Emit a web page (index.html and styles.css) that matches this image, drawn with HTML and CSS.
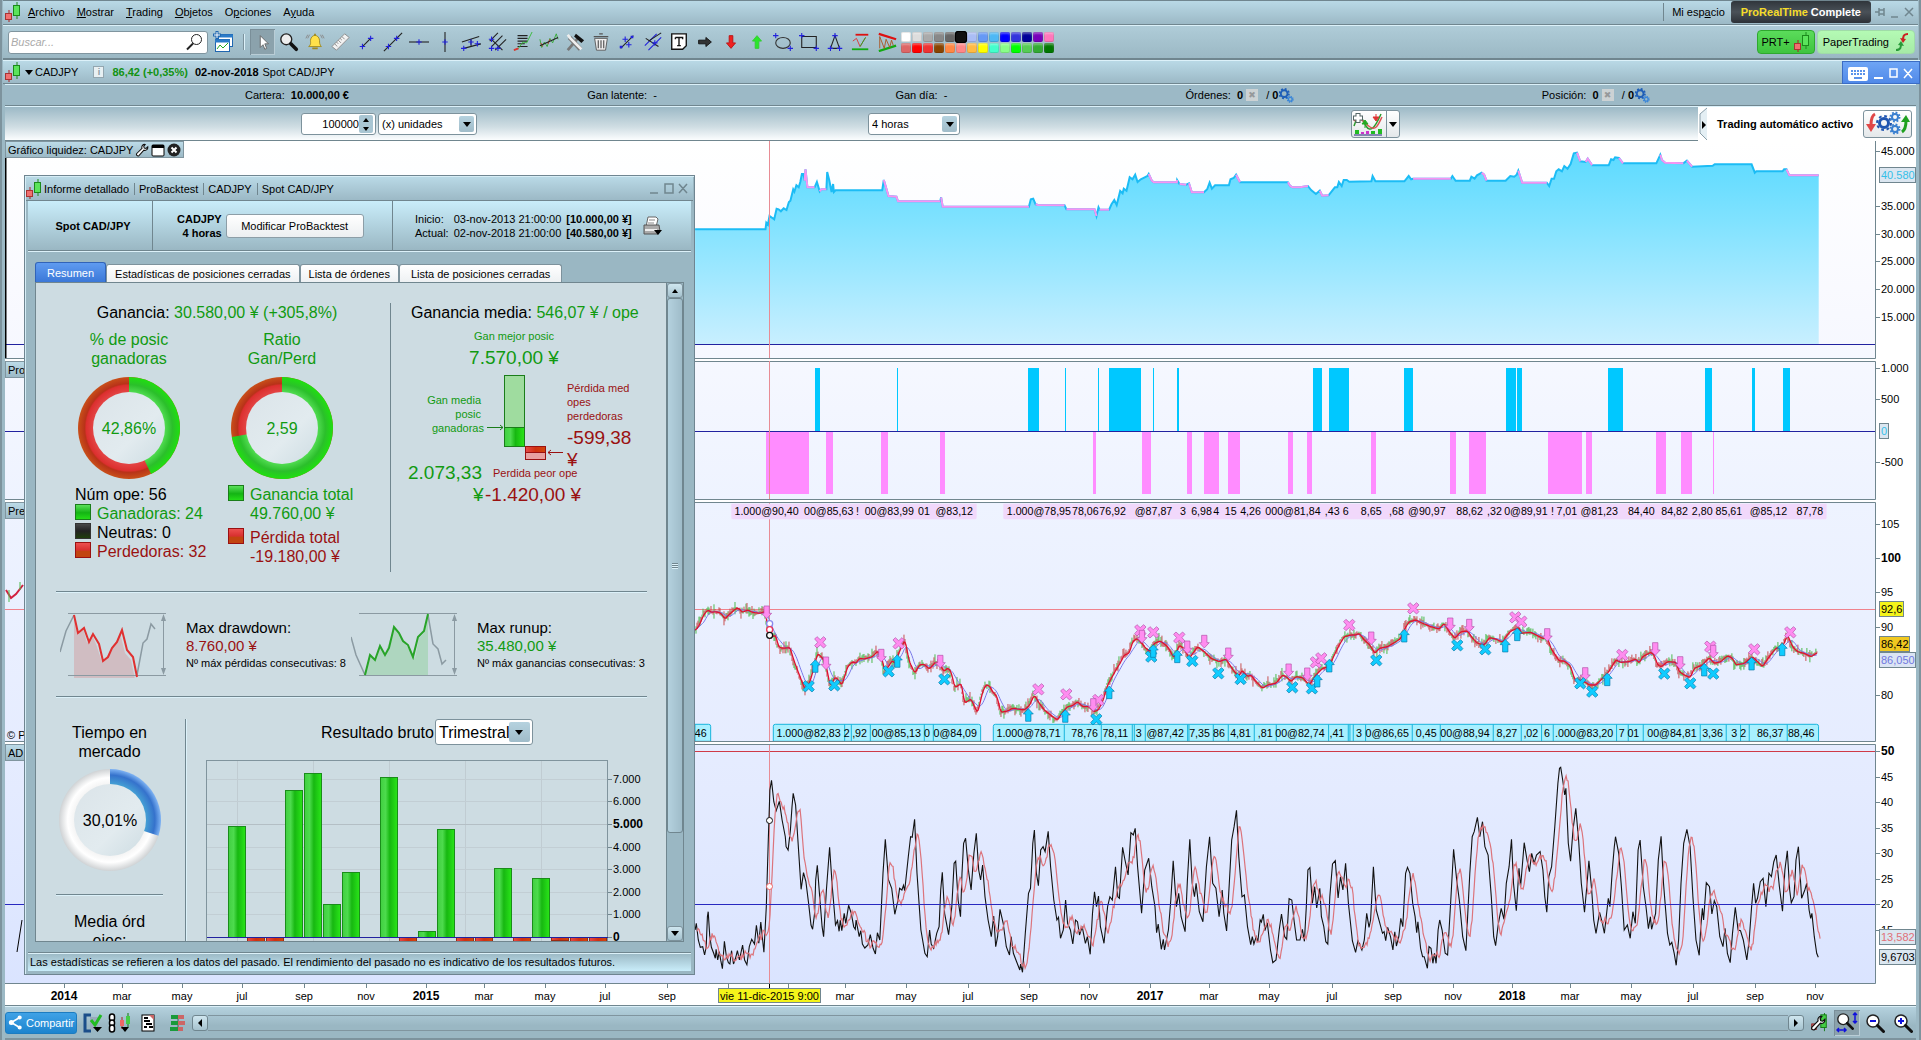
FILE: index.html
```html
<!DOCTYPE html>
<html lang="es">
<head>
<meta charset="utf-8">
<title>ProRealTime Complete</title>
<link rel="stylesheet" href="styles.css">
</head>
<body>
<svg class="defs" aria-hidden="true">
  <defs>
    <symbol id="candles" viewBox="0 0 16 20">
      <path d="M4 8v12" stroke="#a22"/><rect x=".5" y="11.500" width="6" height="6" fill="#f07070" stroke="#a33"/>
      <path d="M12 0v17" stroke="#1c8a1c"/><rect x="8.500" y="3.500" width="6" height="10" fill="#5be45b" stroke="#1c8a1c"/>
    </symbol>
    <symbol id="gears" viewBox="0 0 16 16">
      <circle cx="5.500" cy="6" r="3.600" fill="none" stroke="#1f5fb8" stroke-width="2"/>
      <circle cx="5.500" cy="6" r="5" fill="none" stroke="#1f5fb8" stroke-width="2" stroke-dasharray="2 1.930"/>
      <circle cx="12" cy="12" r="2" fill="none" stroke="#3a86d8" stroke-width="1.500"/>
      <circle cx="12" cy="12" r="3" fill="none" stroke="#3a86d8" stroke-width="1.500" stroke-dasharray="1.300 1.056"/>
    </symbol>
    <symbol id="lens" viewBox="0 0 20 20">
      <circle cx="8" cy="8" r="6" fill="#fff" stroke="#222" stroke-width="1.500"/><path d="M12.500 12.500l6 6" stroke="#111" stroke-width="3" stroke-linecap="round"/>
    </symbol>
    <symbol id="wrench" viewBox="0 0 16 16">
      <path d="M2 12l6-6c-.8-2.500 1-4.800 3.600-4.400L10 3.800l.6 2 2 .4 2-1.800c.4 2.800-1.800 4.600-4.400 3.800L4.500 14.500c-1.700 1-3.500-.8-2.500-2.500z" fill="#fff" stroke="#111" stroke-width="1.200"/>
    </symbol>
    <linearGradient id="green" x1="0" x2="1" y1="0" y2="0"><stop offset="0" stop-color="#41cf41"/><stop offset=".3" stop-color="#4ddb4d"/><stop offset=".55" stop-color="#17b811"/><stop offset="1" stop-color="#2ae619"/></linearGradient>
    <linearGradient id="red" x1="0" x2="1" y1="0" y2="0"><stop offset="0" stop-color="#e84848"/><stop offset=".5" stop-color="#d03010"/><stop offset="1" stop-color="#d2450a"/></linearGradient>
    <radialGradient id="ring-green" gradientUnits="userSpaceOnUse" cx="52" cy="52" r="51"><stop offset=".7" stop-color="#52dc52"/><stop offset=".85" stop-color="#2bbf2b"/><stop offset="1" stop-color="#1fe010"/></radialGradient>
    <radialGradient id="ring-red" gradientUnits="userSpaceOnUse" cx="52" cy="52" r="51"><stop offset=".7" stop-color="#e34545"/><stop offset=".84" stop-color="#dc2f2f"/><stop offset=".87" stop-color="#b83218"/><stop offset="1" stop-color="#c8501a"/></radialGradient>
    <radialGradient id="ring-blue" gradientUnits="userSpaceOnUse" cx="52" cy="52" r="51"><stop offset=".7" stop-color="#45a0d4"/><stop offset=".88" stop-color="#3572cc"/><stop offset="1" stop-color="#7fb4f4"/></radialGradient>
    <radialGradient id="ring-white" gradientUnits="userSpaceOnUse" cx="52" cy="52" r="51"><stop offset=".7" stop-color="#f4f4f4"/><stop offset=".83" stop-color="#fff"/><stop offset="1" stop-color="#cfd2d4"/></radialGradient>
    <linearGradient id="hole" x1="0" y1="0" x2="1" y2="1"><stop offset="0" stop-color="#dbe4e9"/><stop offset=".6" stop-color="#e2ebef"/><stop offset="1" stop-color="#cddce2"/></linearGradient>
    <linearGradient id="equity" x1="0" y1="0" x2="0" y2="1"><stop offset="0" stop-color="#5cdaff"/><stop offset=".35" stop-color="#7fe2ff"/><stop offset="1" stop-color="#c8efff"/></linearGradient>
  </defs>
</svg>

<div class="app">
  <header class="menubar">
    <svg class="candles"><use href="#candles"/></svg>
    <nav class="menus"><a href="#"><u>A</u>rchivo</a><a href="#"><u>M</u>ostrar</a><a href="#"><u>T</u>rading</a><a href="#"><u>O</u>bjetos</a><a href="#">O<u>p</u>ciones</a><a href="#">A<u>y</u>uda</a></nav>
    <a class="space" href="#">Mi esp<u>a</u>cio</a>
    <strong class="brand"><span>ProRealTime</span> Complete</strong>
    <svg class="win-icons" width="42" height="16" fill="none" stroke="#70868f" stroke-width="1.500"><path d="M0 8h4M4 4v8M4 6h5v4H4M9 4v8"/><path d="M16 13h7M30 4l8 8M38 4l-8 8"/></svg>
  </header>

  <div class="toolbar">
    <label class="search"><input type="text" placeholder="Buscar..." aria-label="Buscar"><svg width="18" height="18" fill="none" stroke="#222"><circle cx="10.500" cy="6.500" r="5"/><path d="M7 10.500l-6 6" stroke-width="2"/></svg></label>
    <button class="tool newwin" aria-label="Nueva ventana"><svg width="22" height="22"><rect x="5.500" y="3.500" width="14" height="12" fill="#fff" stroke="#1f66b0"/><path d="M5 5h15" stroke="#2a7bc8" stroke-width="3"/><rect x="2.500" y="8.500" width="14" height="12" fill="#fff" stroke="#1f66b0"/><path d="M2 10h15" stroke="#2a7bc8" stroke-width="3"/><path d="M4 18l3-4 3 3 5-5" stroke="#2a2" fill="none"/><path d="M4 0v8M0 4h8" stroke="#1f66b0" stroke-width="3"/><path d="M4 1v6M1 4h6" stroke="#fff"/></svg></button>
    <i class="sep"></i>
    <div class="tools" id="tools"></div>
    <div class="palette" id="palette"></div>
    <button class="prt">PRT+ <svg class="candles"><use href="#candles"/></svg></button>
    <button class="paper">PaperTrading <svg width="14" height="20" fill="none" stroke-width="2"><path d="M13 2c-5 0-5 3-5 7" stroke="#c22"/><path d="M5 6l3 5 3-4z" fill="#c22"/><path d="M1 18c5 0 5-3 5-7" stroke="#2a9a3a"/><path d="M3 13l3-4 3 5z" fill="#2a9a3a"/></svg></button>
  </div>

  <div class="titlebar">
    <svg class="candles"><use href="#candles"/></svg><i class="caret"></i><span>CADJPY</span><b class="info">i</b>
    <b class="up">86,42 (+0,35%)</b><b>02-nov-2018</b><span class="spot">Spot CAD/JPY</span>
    <div class="winbox"><svg width="66" height="18" fill="none" stroke="#fff" stroke-width="2"><rect x="0" y="2" width="20" height="14" rx="2" fill="#fff" stroke="none"/><path d="M3 6h14M3 9h14" stroke="#5b93ea" stroke-dasharray="2 1"/><path d="M6 13h8" stroke="#5b93ea"/><path d="M26 13h9"/><path d="M42 4h7v8h-7zM56 4l8 9M64 4l-8 9" stroke-width="1.500"/></svg></div>
  </div>

  <div class="infobar">
    <span>Cartera:&nbsp; <b>10.000,00 €</b></span>
    <span>Gan latente:&nbsp; -</span>
    <span>Gan día:&nbsp; -</span>
    <span>Órdenes:&nbsp; <b>0</b> <i class="noop">✖</i> &nbsp;/ <b>0</b><svg class="gears"><use href="#gears"/></svg></span>
    <span>Posición:&nbsp; <b>0</b> <i class="noop">✖</i> &nbsp;/ <b>0</b><svg class="gears"><use href="#gears"/></svg></span>
  </div>

  <div class="controls">
    <div class="qty">
      <label class="spin"><input type="text" value="100000" aria-label="Cantidad"><span class="steps"><i class="tri-up"></i><i class="tri-down"></i></span></label>
      <label class="select units"><select aria-label="Unidad"><option>(x) unidades</option></select><span><i class="tri-down"></i></span></label>
    </div>
    <div><label class="select hours"><select aria-label="Periodo"><option>4 horas</option></select><span><i class="tri-down"></i></span></label></div>
    <div><button class="indicator" aria-label="Indicadores"><svg width="34" height="26" fill="none"><path d="M2 15c6-18 8-6 12 0s8 4 15-12" stroke="#2a9a2a" stroke-width="1.500"/><path d="M2 10c6-6 10 2 16 6s8-2 12-10" stroke="#d55" stroke-width="1.500"/><path d="M2 24h28" stroke="#227" stroke-width="1"/><path d="M3 19h4v4H3zM19 20h4v3h-4zM26 18h4v5h-4z" fill="#2b2"/><path d="M9 21h3v2H9zM14 20h3v3h-3z" fill="#c3c"/><path d="M6 2v10M1 7h10" stroke="#566" stroke-width="5"/><path d="M6 3v8M2 7h8" stroke="#fff" stroke-width="3"/><path d="M13 17v-5M10 13l3-4 3 4z" stroke="#2a2" fill="#2a2"/><path d="M24 3v4M21 6l3 4 3-4z" stroke="#d33" fill="#d33"/></svg><span><i class="tri-down"></i></span></button></div>
    <div class="auto"><svg width="9" height="34"><path d="M9 1L2 7v19l7 7" fill="#e4eff4" stroke="#8a9ea8"/><path d="M4 14l4 4-4 4z"/></svg><b>Trading automático activo</b><button aria-label="Trading automático"><svg width="44" height="24" viewBox="0 0 44 24" fill="none"><path d="M9 3C5 5 5 10 5 14" stroke="#e04848" stroke-width="3"/><path d="M0 13h10l-5 8z" fill="#e04848"/><path d="M36 21c3-2 4-6 4-11" stroke="#1fa01f" stroke-width="3"/><path d="M35 11h9l-4-7z" fill="#1fa01f"/><g stroke="#1f55b0"><circle cx="18" cy="12" r="4.500" stroke-width="3"/><circle cx="18" cy="12" r="7" stroke-width="2" stroke-dasharray="2.800 2.700"/><circle cx="29" cy="6" r="3" stroke-width="2" stroke="#3a80d0"/><circle cx="29" cy="6" r="4.500" stroke-width="2" stroke="#3a80d0" stroke-dasharray="1.800 1.730"/><circle cx="29" cy="18" r="3" stroke-width="2" stroke="#3a80d0"/><circle cx="29" cy="18" r="4.500" stroke-width="2" stroke="#3a80d0" stroke-dasharray="1.800 1.730"/></g></svg></button></div>
  </div>

  <main class="charts">
    <section class="pane"><div class="pane-title">Gráfico liquidez: CADJPY <svg width="14" height="14"><use href="#wrench"/></svg><svg width="14" height="14"><rect x="1" y="2" width="12" height="11" rx="1" fill="#fff" stroke="#000"/><path d="M1 3.500h12" stroke="#000" stroke-width="3"/></svg><svg width="14" height="14"><circle cx="7" cy="7" r="6.500" fill="#222"/><path d="M4.500 4.500l5 5M9.500 4.500l-5 5" stroke="#fff" stroke-width="2"/></svg></div><svg id="p1" viewBox="5 141 1911 220"></svg></section>
    <section class="pane"><div class="pane-title">Pro</div><svg id="p2" viewBox="5 361 1911 141"></svg></section>
    <section class="pane"><div class="pane-title">Pre</div><svg id="p3" viewBox="5 502 1911 242"></svg></section>
    <section class="pane"><div class="pane-title">AD</div><svg id="p4" viewBox="5 744 1911 240"></svg></section>
    <section class="pane time"><svg id="p5" viewBox="5 984 1911 22"></svg></section>
  </main>

  <footer class="bottombar">
    <button class="share"><svg width="18" height="18" viewBox="0 0 18 18" fill="#fff" stroke="#fff" stroke-width="2"><path d="M4 9l10-6M4 9l10 6"/><circle cx="4" cy="9" r="2"/><circle cx="14" cy="3" r="1.500"/><circle cx="14" cy="15" r="1.500"/></svg>Compartir</button>
    <svg width="22" height="20"><path d="M9 2H3v16h6" fill="none" stroke="#1b4e8a" stroke-width="3"/><rect x="8" y="4" width="8" height="12" fill="#9ab"/><path d="M9 7l4 5 6-10" fill="none" stroke="#2b2" stroke-width="3"/><path d="M11 14h9l-4.500 5z"/></svg>
    <svg class="gap" width="24" height="20"><g fill="#fff" stroke="#000" stroke-width="1.500"><rect x="1.500" y="1" width="5" height="7" rx="2.500"/><rect x="1.500" y="7" width="5" height="6" rx="2.500"/><rect x="1.500" y="12" width="5" height="7" rx="2.500"/></g><path d="M14 4v12" stroke="#a22"/><rect x="12" y="7" width="4" height="6" fill="#e66"/><path d="M20 0v14" stroke="#171"/><rect x="18" y="3" width="4" height="8" fill="#4c4"/><path d="M13 14h8l-4 5z"/></svg>
    <svg class="gap2" width="14" height="18"><rect x="1" y="1" width="12" height="16" fill="#fff" stroke="#000"/><path d="M3 4h4M3 7h6M5 10h6M3 13h3M8 13h4" stroke="#000" stroke-width="2"/><path d="M8 1h5v5z" fill="#c66"/></svg>
    <svg class="gap2" width="18" height="18"><path d="M9 1v16" stroke="#555"/><path d="M2 3h7M2 9h7M1 15h8" stroke="#1a9a3a" stroke-width="4"/><path d="M9 3h6M9 9h7M9 15h5" stroke="#c66" stroke-width="4"/></svg>
    <button class="scroll-btn" aria-label="Atrás"><i class="tri-left"></i></button>
    <div class="scroll-track"></div>
    <button class="scroll-btn" aria-label="Adelante"><i class="tri-right"></i></button>
    <button class="view" aria-label="Ajustes"><svg width="20" height="20" viewBox="0 0 22 22"><path d="M17 0v20" stroke="#171"/><rect x="13" y="2" width="6" height="14" fill="#4c4" stroke="#171"/><rect x="3" y="12" width="5" height="6" fill="#d66" stroke="#822"/><use href="#wrench" x="1" y="2" width="18" height="18"/></svg></button>
    <button class="view on" aria-label="Zoom libre"><svg width="22" height="22"><use href="#lens" width="18" height="18"/><path d="M19 1v10M17 3l2-2 2 2M17 9l2 2 2-2M1 18h9M3 16l-2 2 2 2M8 16l2 2-2 2" fill="none" stroke="#11d" stroke-width="1.500"/></svg></button>
    <button class="view" aria-label="Alejar"><svg width="20" height="20"><use href="#lens"/><path d="M5 8h6" stroke="#11d" stroke-width="2"/></svg></button>
    <button class="view" aria-label="Acercar"><svg width="20" height="20"><use href="#lens"/><path d="M5 8h6M8 5v6" stroke="#11d" stroke-width="2"/></svg></button>
  </footer>

  <section class="report" role="dialog" aria-label="Informe detallado">
    <div class="report-title"><svg class="candles"><use href="#candles"/></svg><span>Informe detallado</span><span>ProBacktest</span><span>CADJPY</span><span>Spot CAD/JPY</span>
      <svg class="win" width="40" height="16" fill="none" stroke="#70868f" stroke-width="1.500"><path d="M1 12h8M16 3h8v9h-8zM30 3l8 9M38 3l-8 9"/></svg></div>
    <div class="report-head">
      <b class="h1">Spot CAD/JPY</b>
      <div class="h2"><b>CADJPY<br>4 horas</b><button>Modificar ProBacktest</button></div>
      <div class="h3"><table><tr><td>Inicio:</td><td>03-nov-2013 21:00:00</td><td><b>[10.000,00 ¥]</b></td></tr><tr><td>Actual:</td><td>02-nov-2018 21:00:00</td><td><b>[40.580,00 ¥]</b></td></tr></table>
      <svg width="20" height="20"><path d="M6 1h8l2 2-2 8H4z" fill="#fff" stroke="#666"/><path d="M7 4h6M6 7h6" stroke="#888"/><path d="M2 9h15l1 6-2 3H2z" fill="#aaa" stroke="#555"/><path d="M3 14h12" stroke="#eee" stroke-width="2"/><path d="M12 14h8l-4 5z"/></svg></div>
    </div>
    <div class="tabs"><button class="active">Resumen</button><button>Estadísticas de posiciones cerradas</button><button>Lista de órdenes</button><button class="wide">Lista de posiciones cerradas</button></div>
    <div class="sheet">
      <div class="content">
        <div class="summary">
          <div class="left">
            <p class="gain">Ganancia: <span class="g">30.580,00 ¥ (+305,8%)</span></p>
            <div class="rings">
              <div class="c1"><h3>% de posic<br>ganadoras</h3><svg class="ring" data-p="0.4286" data-a="green" data-b="red" data-t="42,86%" width="104" height="104"></svg>
                <ul><li class="plain">Núm ope: 56</li><li class="g"><i class="sw sg"></i>Ganadoras: 24</li><li><i class="sw sk"></i>Neutras: 0</li><li class="r"><i class="sw sr"></i>Perdedoras: 32</li></ul></div>
              <div class="c2"><h3>Ratio<br>Gan/Perd</h3><svg class="ring" data-p="0.7214" data-a="green" data-b="red" data-t="2,59" width="104" height="104"></svg>
                <ul><li class="g two"><i class="sw sg"></i><span>Ganancia total<br>49.760,00 ¥</span></li><li class="r two"><i class="sw sr"></i><span>Pérdida total<br>-19.180,00 ¥</span></li></ul></div>
            </div>
          </div>
          <div class="right">
            <p class="gain">Ganancia media: <span class="g">546,07 ¥ / ope</span></p>
            <svg class="avg" width="264" height="186" viewBox="398 325 264 186">
              <g fill="#119a11" font-size="11"><text x="514" y="340" text-anchor="middle">Gan mejor posic</text><text x="514" y="364" font-size="19" text-anchor="middle">7.570,00 ¥</text>
              <text x="481" y="404" text-anchor="end">Gan media</text><text x="481" y="418" text-anchor="end">posic</text><text x="484" y="432" text-anchor="end">ganadoras</text><text x="408" y="479" font-size="19">2.073,33</text><text x="473" y="501" font-size="19">¥</text></g>
              <rect x="504.500" y="375.500" width="20" height="52" fill="#9fdc9f" stroke="#1a7d1a"/><rect x="504.500" y="427.500" width="20" height="19" fill="url(#green)" stroke="#1a7d1a"/>
              <rect x="525.500" y="452.500" width="20" height="7" fill="#e8a0a0" stroke="#9a1111"/><rect x="525.500" y="446.500" width="20" height="6" fill="url(#red)" stroke="#9a1111"/>
              <path d="M487 427.500h16M500 425l3 2.500-3 2.500" fill="none" stroke="#1a7d1a"/><path d="M563 452.500h-15M551 450l-3 2.500 3 2.500" fill="none" stroke="#9a1111"/>
              <g fill="#9a1111" font-size="11"><text x="567" y="392">Pérdida med</text><text x="567" y="406">opes</text><text x="567" y="420">perdedoras</text><text x="567" y="444" font-size="19">-599,38</text><text x="567" y="466" font-size="19">¥</text><text x="493" y="477">Perdida peor ope</text><text x="485" y="501" font-size="19">-1.420,00 ¥</text></g>
            </svg>
          </div>
        </div>
        <hr>
        <div class="extremes">
          <svg width="108" height="66" viewBox="60 612 108 66" fill="none"><path d="M74 615l4 17 5-4 4 15 5-8 4 9 6 18 4-3 4-9 5-6 5-11 5 20 6 7 4 19H74z" fill="#d33" fill-opacity=".18"/><path d="M68 613.500h98M68 675.500h98M163.500 616v57" stroke="#8b9aa2"/><path d="M161 621l2.500-7 2.500 7zM161 668l2.500 7 2.500-7z" fill="#8b9aa2"/><path d="M60 652l6-21 8-16M137 675l6-32 4-4 4-15 4 5" stroke="#8b9aa2" stroke-width="1.500"/><path d="M74 615l4 18 6-5 5 14 4-8 6 10 4 17 5-4 4-9 5-6 5-12 5 20 6 7 4 20" stroke="#e03030" stroke-width="2"/></svg>
          <p>Max drawdown:<br><span class="r">8.760,00 ¥</span><small>Nº máx pérdidas consecutivas: 8</small></p>
          <svg width="108" height="66" viewBox="351 612 108 66" fill="none"><path d="M365 675l5-20 5 5 5-14 5 8 9-26 12 17 9 13 4-20 5-5 4-17v59z" fill="#2b2" fill-opacity=".18"/><path d="M359 613.500h98M359 675.500h98M454.500 616v57" stroke="#8b9aa2"/><path d="M452 621l2.500-7 2.500 7zM452 668l2.500 7 2.500-7z" fill="#8b9aa2"/><path d="M351 637l5 18 9 20M428 615l5 29 5 5 4 15 4-4" stroke="#8b9aa2" stroke-width="1.500"/><path d="M365 675l5-20 5 5 5-14 5 9 4-7 5-21 5 6 4 8 5 4 5 12 5-20 6-6 4-17" stroke="#28a428" stroke-width="2"/></svg>
          <p>Max runup:<br><span class="g">35.480,00 ¥</span><small>Nº máx ganancias consecutivas: 3</small></p>
        </div>
        <hr>
        <div class="bottom">
          <div class="market"><h3>Tiempo en<br>mercado</h3><svg class="ring" data-p="0.3001" data-a="blue" data-b="white" data-t="30,01%" width="104" height="104"></svg><hr><h3>Media órd<br>ejec:</h3></div>
          <div class="gross"><label class="gross-sel">Resultado bruto <span class="select big"><select><option>Trimestral</option></select><span><i class="tri-down"></i></span></span></label><svg id="bars" width="450" height="183" viewBox="206 760 450 183"></svg></div>
        </div>
      </div>
      <div class="vscroll"><button aria-label="Subir"><i class="tri-up"></i></button><div class="thumb"><i></i></div><button aria-label="Bajar"><i class="tri-down"></i></button></div>
    </div>
    <div class="report-foot">Las estadísticas se refieren a los datos del pasado. El rendimiento del pasado no es indicativo de los resultados futuros.</div>
  </section>
</div>
<script src="charts.js"></script>
</body>
</html>
```
FILE: styles.css
```css
* { box-sizing: border-box; }
body { margin: 0; font: 11px/14px "Liberation Sans", Arial, sans-serif; color: #000; background: #9cb9c5; }
button, input, select { font: inherit; color: inherit; margin: 0; }
button { padding: 0; border: 0; background: none; }
a { color: inherit; text-decoration: none; }
h3, p, ul { margin: 0; padding: 0; font-size: inherit; font-weight: normal; list-style: none; }
svg { flex: none; }
.defs { position: absolute; width: 0; height: 0; }
.candles { width: 16px; height: 20px; }
.app { position: relative; padding: 0 5px; background: #9cb9c5; box-shadow: inset 2px 0 #7d939d, inset -2px 0 #7d939d; white-space: nowrap; }

.tri-up, .tri-down, .tri-left, .tri-right { width: 0; height: 0; border: 4px solid transparent; }
.tri-up { border-width: 0 3px 4px; border-bottom-color: #000; }
.tri-down { border-width: 5px 4px 0; border-top-color: #000; }
.tri-left { border-width: 4px 4px 4px 0; border-right-color: #000; }
.tri-right { border-width: 4px 0 4px 4px; border-left-color: #000; }

.menubar, .toolbar, .titlebar { display: flex; align-items: center; margin: 0 -2px; padding-left: 2px; background: linear-gradient(#b9d9e6, #9cb9c6); border-bottom: 1px solid #70868f; border-top: 1px solid #dcf1f9; }
.menubar { height: 25px; padding-right: 1px; padding-bottom: 1px; border-top-color: #70868f; }
.menus { display: flex; gap: 12px; margin: 0 auto 0 7px; }
.space { border-left: 1px solid #70868f; padding: 2px 6px 2px 8px; }
.brand { height: 22px; padding: 0 10px; border-radius: 3px; background: linear-gradient(#30363c, #4a5158, #2c3137); color: #fff; line-height: 22px; }
.brand span { color: #f5dc2a; }
.win-icons { margin-left: 4px; }
.toolbar { height: 35px; gap: 2px; background: linear-gradient(#afccd8, #9bb8c4); border-bottom-width: 2px; }
.search { display: flex; align-items: center; width: 200px; height: 23px; margin-left: 3px; padding-right: 3px; background: #fff; border: 1px solid #80959f; border-radius: 3px; }
.search input { flex: 1; min-width: 0; border: 0; outline: 0; background: none; font-style: italic; }
.search input::placeholder { color: #aaa; }
.newwin { margin-left: 3px; height: 22px; }
.sep { width: 2px; height: 16px; margin: 0 3px 0 6px; background: #7d939d; border-right: 1px solid #dcf1f9; }
.tools { display: flex; gap: 1px; }
.tools button { width: 25px; height: 26px; display: grid; place-items: center; }
.tools .on, .view.on { background: #8ba2ac; box-shadow: inset 1px 1px #7a8f99, inset -1px -1px #b9cdd6; }
.palette { display: grid; grid-template-columns: repeat(14, 10px); gap: 1px; margin-right: auto; }
.palette button { height: 10px; border-radius: 2px; box-shadow: inset 0 2px 2px #ffffff55, inset 0 0 0 1px #00000022; }
.palette .cur { box-shadow: 0 0 0 1px #000; outline: 1px solid #000; }
.prt, .paper { height: 24px; border-radius: 4px; display: flex; align-items: center; gap: 4px; padding: 0 4px; border: 1px solid #2fa82f; background: linear-gradient(#5bdc5b, #3fc43f); }
.paper { margin-right: 3px; padding: 0 5px; gap: 6px; border-color: #a0dca8; background: linear-gradient(#b4fab4, #a6eaa6); }
.titlebar { height: 24px; gap: 4px; margin-right: -4px; }
.caret { border: 4px solid transparent; border-top: 5px solid #000; border-bottom: 0; margin: 0 -2px 0 0; }
.info { width: 11px; height: 12px; margin: 0 4px 0 11px; background: #e8f0f3; border: 1px solid #93a6af; color: #8a9aa2; font-size: 9px; line-height: 10px; text-align: center; }
.up { color: #129212; margin-right: 3px; }
.winbox { margin-left: auto; height: 23px; padding: 3px 5px; background: linear-gradient(#6ea5f5, #5089e8); border: 1px solid #3b6cc4; }
.infobar { display: grid; grid-template-columns: 342fr 308fr 290fr 356fr 374fr; padding-left: 240px; height: 22px; align-items: center; background: #9cb9c6; border-top: 1px solid #dcf1f9; border-bottom: 1px solid #70868f; }
.infobar span { display: flex; align-items: center; white-space: pre; }
.noop { width: 12px; height: 12px; margin: 0 2px 0 3px; background: #ccd2d4; color: #96999b; font: 9px/12px "DejaVu Sans", sans-serif; text-align: center; }
.gears { width: 15px; height: 15px; margin-left: 1px; }
.controls { display: grid; grid-template-columns: 567fr 483fr 347fr 218fr; height: 35px; padding: 0 0 1px 296px; align-items: center; border-top: 1px solid #dcf1f9; border-bottom: 1px solid #70868f; background: linear-gradient(#9cb9c6, #cfdde3 60%, #fbfdfe); }
.qty { display: flex; gap: 2px; }
.select, .spin { position: relative; display: inline-flex; height: 22px; background: #fff; border: 1px solid #7d929c; border-radius: 3px; vertical-align: middle; }
.select select { appearance: none; border: 0; outline: 0; background: none; width: 100%; padding: 0 18px 0 3px; }
.select > span { position: absolute; right: 2px; top: 2px; bottom: 2px; width: 15px; display: grid; place-items: center; pointer-events: none; background: linear-gradient(#b5d2df, #a0bcc9); border-radius: 2px; }
.spin { width: 75px; align-items: center; padding-right: 2px; }
.spin input { width: 100%; border: 0; outline: 0; text-align: right; padding: 0; }
.steps { flex: none; width: 14px; height: 18px; display: flex; flex-direction: column; align-items: center; justify-content: space-around; background: #a9c6d3; border-radius: 2px; }
.steps .tri-down { border-width: 4px 3px 0; }
.units { width: 99px; }
.hours { width: 92px; }
.indicator { display: flex; height: 28px; width: 49px; background: linear-gradient(#fff, #e4e8ea); border: 1px solid #7d929c; border-radius: 3px; }
.indicator span { flex: 1; display: grid; place-items: center; border-left: 1px solid #7d929c; height: 100%; }
.auto { display: flex; align-items: center; align-self: stretch; background: #fff; padding-right: 4px; }
.auto b { margin: 0 auto 0 10px; }
.auto button { height: 28px; width: 49px; background: linear-gradient(#fff, #e4e8ea); border: 1px solid #7d929c; border-radius: 3px; }

.charts { background: linear-gradient(#fff, #f8f9ff 20%, #eef3ff 42%, #e4ebff 75%, #d9e3ff); }
.pane { position: relative; }
.pane > svg { display: block; width: 100%; height: auto; }
.pane-title { position: absolute; left: 0; top: 0; height: 17px; display: flex; align-items: center; gap: 2px; padding: 0 2px; background: linear-gradient(#bcdbe8, #9cb9c6); border: 1px solid #80959f; }

.bottombar { display: flex; align-items: center; height: 34px; border-top: 1px solid #dcf1f9; border-bottom: 2px solid #7d939d; background: linear-gradient(#b4d1de, #9ab7c3 60%); }
.share { display: flex; align-items: center; gap: 3px; width: 72px; height: 22px; padding: 0 2px; border: 1px solid #1d7cc0; border-radius: 3px; background: linear-gradient(#3fa2e6, #1d84ce); color: #fff; margin-right: 5px; }
.share svg { width: 15px; height: 15px; }
.gap { margin-left: 4px; }
.gap2 { margin-left: 9px; margin-right: 5px; }
.scroll-btn { width: 16px; height: 16px; display: grid; place-items: center; border: 1px solid #70868f; border-radius: 3px; background: linear-gradient(#cfe6ef, #a5c2ce); }
.scroll-track { flex: 1; height: 16px; border: 1px solid #80959f; border-width: 1px 0; }
.view { width: 26px; height: 26px; margin-left: 2px; display: grid; place-items: center; }

.report { position: absolute; left: 24px; top: 175px; width: 671px; height: 800px; display: flex; flex-direction: column; padding: 0 3px 3px; background: #9ab7c3; border: 1px solid #6f8591; box-shadow: inset 1px 1px #d6edf6; }
.report-title { display: flex; align-items: center; height: 24px; flex: none; margin: 1px -2px 0; padding-right: 4px; background: linear-gradient(#b9d9e6, #9cb9c6); border-bottom: 1px solid #70868f; }
.report-title span { padding: 0 5px 0 4px; border-left: 1px solid #70868f; line-height: 12px; }
.report-title span:nth-of-type(1) { border: 0; padding-left: 2px; }
.report-title .win { margin-left: auto; }
.report-head { display: grid; grid-template-columns: 124px 240px 1fr; flex: none; height: 50px; background: linear-gradient(#c9edfa, #9ab7c3); border-bottom: 1px solid #70868f; box-shadow: 0 1px #dcf1f9; }
.report-head > * { display: flex; align-items: center; }
.h1 { justify-content: center; padding-left: 6px; }
.h2 { gap: 4px; padding-left: 24px; text-align: right; border-left: 1px solid #70868f; }
.h2 button { width: 138px; height: 24px; border: 1px solid #8d9ea7; border-radius: 3px; background: linear-gradient(#fff, #eceff1); }
.h3 { padding-left: 22px; gap: 5px; border-left: 1px solid #70868f; }
.h3 td { padding: 0 5px 0 0; }
.h3 table { border-spacing: 0; }
.tabs { display: flex; align-items: flex-end; flex: none; height: 31px; padding-left: 7px; }
.tabs button { height: 18px; padding: 0 8px; background: linear-gradient(#fff, #eef1f3); border: 1px solid #7d929c; border-bottom: 0; border-radius: 3px 3px 0 0; }
.tabs .wide { padding: 0 11px; }
.tabs .active { height: 20px; padding: 0 11px; color: #fff; background: linear-gradient(#5f9bf0, #3b78d8); border-color: #3163b8; }
.sheet { display: flex; flex: 1; min-height: 0; margin: 0 7px 10px; border: 1px solid #70868f; background: #cddce2; overflow: hidden; }
.content { flex: 1; min-width: 0; overflow: hidden; padding: 20px 19px 0 20px; font-size: 16px; line-height: 19px; }
.g, .rings h3 { color: #119a11; }
.r { color: #9a1111; }
.summary { display: grid; grid-template-columns: 335px 1fr; height: 269px; }
.left { border-right: 1px solid #70868f; text-align: center; }
.right .gain { padding-left: 20px; }
.gain { height: 27px; }
.left .gain { padding-right: 12px; }
.avg { display: block; margin-left: 7px; margin-top: -5px; }
.rings { display: grid; grid-template-columns: 146px 160px; }
.rings h3 { height: 46px; }
.rings ul { text-align: left; padding-left: 19px; }
.rings .c2 ul { padding-left: 26px; }
.rings li { display: flex; gap: 6px; }
.rings .two { height: 43px; }
.ring { display: block; margin: 0 auto 5px; }
.c2 h3 { padding-left: 0; }
.c2 .ring { margin-left: 28px; }
.sw { flex: none; width: 16px; height: 16px; border: 1px solid #333; }
.sg { background: linear-gradient(#5be05b, #14b414 55%, #25dc18); border-color: #1a7d1a; }
.sr { background: linear-gradient(#ec5050, #d83030 50%, #c24410 60%); border-color: #9a1111; }
.sk { background: linear-gradient(#484848, #222 50%, #1f3d0c); }
.content hr { margin: 0; border: 0; height: 2px; background: #70868f; border-bottom: 1px solid #dcf1f9; }
.summary + hr { margin-top: 19px; }
.extremes { display: grid; grid-template-columns: 126px 165px 126px 1fr; align-items: start; height: 103px; padding: 19px 0 0 4px; font-size: 15px; }
.extremes p { padding-top: 7px; line-height: 18px; }
.extremes small { display: block; font-size: 11px; line-height: 16px; }
.bottom { display: grid; grid-template-columns: 130px 1fr; height: 270px; padding-top: 21px; }
.market { border-right: 1px solid #70868f; box-shadow: 1px 0 #dcf1f9; text-align: center; padding: 4px 22px 0 0; }
.market h3 { height: 45px; }
.market .ring { margin: 0 auto 22px; }
.market hr { margin-bottom: 16px; }
.gross { padding-left: 20px; }
.gross-sel { display: flex; align-items: center; gap: 1px; padding: 0 0 15px 115px; }
.big { width: 98px; height: 26px; }
.big > span { width: 21px; }
.gross > svg { display: block; }
.vscroll { width: 17px; display: flex; flex-direction: column; background: #9ab7c3; border-left: 1px solid #70868f; }
.vscroll button { height: 15px; display: grid; place-items: center; border: 1px solid #7d929c; border-radius: 3px; background: linear-gradient(#cfe6ef, #a5c2ce); }
.thumb { height: 535px; margin-bottom: auto; display: grid; place-items: center; background: linear-gradient(90deg, #b4d1de, #9fbcc9); border: 1px solid #70868f; border-radius: 3px; }
.thumb i { width: 6px; height: 6px; background: repeating-linear-gradient(#70868f 0 1px, #dcf1f9 1px 2px); }
.report-foot { flex: none; height: 19px; padding-left: 2px; line-height: 18px; border-top: 1px solid #70868f; background: linear-gradient(#9ab7c3, #c9edfa); box-shadow: inset 0 1px #dcf1f9; }
svg text { font-family: "Liberation Sans", Arial, sans-serif; }
```
FILE: charts.js
```js
const $ = id => document.getElementById(id);
const pairs = s => s.trim().split(/\s+/).map(p => p.split(',').map(Number));
const shift = (list, dx) => list.map(([x, y]) => [x + dx, y]);
const place = (list, ox, oy, sx, sy) => list.map(([x, y]) => [ox + x / sx, oy + y / sy]);
const path = list => 'M' + list.map(([x, y]) => x.toFixed(1) + ' ' + y.toFixed(1)).join('L');
let seed = 7;
const rnd = () => (seed = (seed * 16807) % 2147483647) / 2147483647;

/* drawing tools */
const B = 'stroke="#22d" stroke-width="1.200"';
const cross = pts => pts.map(([x, y]) => `<path d="M${x - 3} ${y}h6M${x} ${y - 3}v6" ${B}/>`).join('');
const K = d => `<path d="${d}" stroke="#222" stroke-width="1.200" fill="none"/>`;
const arrow = (c, s, r) => `<path transform="rotate(${r} 11 11)" d="M11 4l5 6h-3v8H9v-8H6z" fill="${c}" stroke="${s}"/>`;
const icons = [
  '<path d="M8 4v13l3-3 2 5 2-1-2-5h4z" fill="#fff" stroke="#666"/>',
  '<circle cx="8" cy="8" r="6" fill="#eee" stroke="#222" stroke-width="1.500"/><path d="M13 13l6 6" stroke="#111" stroke-width="4" stroke-linecap="round"/>',
  '<path d="M4 16c3-2 2-5 2-7 1-7 9-7 10 0 0 3 0 5 2 7z" fill="#ffe14a" stroke="#a08a20"/><path d="M8 18h6M11 2v2" stroke="#a08a20" stroke-width="2"/><path d="M3 3L1 7M5 3L3 7M19 3l2 4M17 3l2 4" stroke="#888"/>',
  '<path d="M1 16L15 2l5 4L6 20z" fill="#f2f2f2" stroke="#888"/><path d="M4 13l3 3M6 11l2 2M8 9l3 3M10 7l2 2M12 5l3 3" stroke="#888"/>',
  K('M6 16l9-9') + cross([[6, 16], [15, 7]]), K('M1 21L21 1') + cross([[6, 16], [15, 7]]), K('M0 11h22') + cross([[11, 11]]), K('M11 0v22') + cross([[11, 11]]),
  K('M1 11l19-6M3 18l19-5M11 8v7') + cross([[3, 18], [11, 11], [18, 13]]), K('M3 10L12 1M5 16L17 4M9 20L21 8M5 8l12 12') + cross([[5, 8], [5, 18], [12, 18]]),
  K('M5 4h11M5 7h11M5 10h11M5 13h8M5 16h11') + '<path d="M1 20l5-2 5-7 4 1 6-12" stroke="#3b3" fill="none"/><path d="M1 20l5-2" stroke="#d33" stroke-width="2"/>',
  '<path d="M1 8l2 9 3-6 3 5 3-9 3 5 4-10 2 6" stroke="#3a3" fill="none"/><path d="M2 12l2 4M10 13l2-5" stroke="#d33"/>' + K('M1 15L21 6'),
  '<path d="M3 20L15 6" stroke="#777" stroke-width="3"/><path d="M12 2l9 7-3 3-8-7z" fill="#111"/><path d="M5 6l12 13" stroke="#777" stroke-width="5"/><path d="M3 3l3 4 12 12" stroke="#eee" stroke-width="3" fill="none"/>',
  '<path d="M4 7h14l-2 13H6z" fill="#eee" stroke="#555"/><path d="M3 5h16M9 2h4M8 9v9M11 9v9M14 9v9" stroke="#555" stroke-width="1.300"/>',
  K('M4 18L18 4') + '<path d="M3 15h3v3H3zM15 4h3v3h-3z" fill="#22d"/>' + cross([[9, 8], [13, 14]]),
  '<path d="M2 15L15 2M6 20L20 6" stroke="#22d" stroke-width="1.200"/>' + K('M6 10L20 1M3 7l14 9') + cross([[13, 12]]),
  '<path d="M3 2h16v13l-4 4H3z" fill="#fff" stroke="#111" stroke-width="1.500"/><path d="M7 6h8v2M7 6v2M11 6v9M9 15h4" stroke="#111" stroke-width="1.500" fill="none"/>',
  arrow('#333', '#111', 90), arrow('#f02020', '#b11', 180), arrow('#2be62b', '#3c3', 0),
  '<ellipse cx="11" cy="12" rx="8" ry="6" fill="none" stroke="#333" stroke-width="1.200"/>' + cross([[3, 4], [19, 18]]), K('M3 5h16v12H3z') + cross([[3, 4], [19, 18]]), K('M11 4l5 14H6z') + cross([[11, 4], [6, 18], [16, 18]]),
  '<path d="M5 3h14" stroke="#d11" stroke-width="2"/><path d="M1 19h18" stroke="#1a1" stroke-width="2"/><path d="M2 10l4-3 4 9 6-10" stroke="#d33" fill="none"/><path d="M10 16l6-10" stroke="#2a2"/>',
  '<path d="M2 2l19 6" stroke="#d11" stroke-width="2.500"/><path d="M2 21l19-6" stroke="#1a1" stroke-width="2.500"/><path d="M3 18V5l5 13 2-10 4 9 2-8 2 6" stroke="#a52" fill="none"/>'
];
const names = 'Cursor,Zoom,Alerta,Regla,Segmento,Recta,Horizontal,Vertical,Canal,Horquilla,Fibonacci,Regresión,Configurar,Borrar,Puntos,Paralelas,Texto,Flecha,Flecha roja,Flecha verde,Elipse,Rectángulo,Triángulo,Soporte,Cuña'.split(',');
$('tools').innerHTML = icons.map((d, i) => `<button aria-label="${names[i]}"${i ? '' : ' class="on"'}><svg width="20" height="20" viewBox="0 0 22 22">${d}</svg></button>`).join('');
$('palette').innerHTML = 'fff ddd aaa 888 666 111 aabdf5 6699f5 4db8f5 00f 33d 009 70b f7b d66 f00 e33 840 f84 f88 fb4 ff0 4fc 8f8 0f0 5c5 3a3 070'.split(' ')
  .map((c, i) => `<button aria-label="Color ${i + 1}"${i === 5 ? ' class="cur"' : ''} style="background:#${c}"></button>`).join('');

/* shared axis parts */
const axisBg = (top, h) => `<rect x="1876" y="${top}" width="40" height="${h}" fill="#fff"/>`;
const tick = (y, t, bold) => `<path d="M1876 ${y + .5}h4" stroke="#70868f"/><text x="1881" y="${y + 4}" font-size="${bold ? 12 : 11}" font-weight="${bold ? 700 : 400}">${t}</text>`;
const tag = (y, t, fill, color, w) => `<rect x="1879.500" y="${y - 7.5}" width="${w}" height="15" fill="${fill}" stroke="#70868f"/><text x="1881" y="${y + 4}" font-size="11" fill="${color}">${t}</text>`;
const frame = (top, bottom) => `<rect x="5" y="${bottom + 1}" width="1911" height="3" fill="#fff"/><path d="M5 ${top + .5}H1875.500V${bottom + .5}H5" fill="none" stroke="#70868f"/>`;
const line = (y, c) => `<path d="M5 ${y + .5}H1875" stroke="${c}"/>`;
const cursor = (a, b) => `<path d="M769.500 ${a}V${b}" stroke="#e88c95"/>`;

/* equity curve */
const eqA = place(pairs(`13,268 191,268 193,248 197,254 201,228 213,238 219,206 224,208 230,214 237,205 244,210 250,186 254,182 261,148 264,155 269,136 275,142 279,126 283,102 287,102 290,122 292,88 297,142 315,142 321,126 328,154 332,148 345,148 347,96 352,120 358,156 362,132 364,156 368,151 486,151 490,120 502,168 522,170 526,184 633,184 635,172 639,200 857,200 862,178 868,176 874,193 880,195 947,196 952,208 1023,208 1028,228 1033,202 1036,209 1060,209 1066,193 1073,180 1079,195 1088,153 1094,160 1097,146 1104,152 1112,112 1119,118 1126,104 1132,126 1140,118 1150,112 1157,108 1160,102 1168,122 1173,127 1231,127 1232,120 1238,132 1255,134 1262,130 1269,157 1300,157 1308,148 1314,128 1320,146 1328,136 1363,136 1367,118 1375,114 1381,104 1391,127 1512,127 1518,138 1524,142`), 690, 140, 2.529, 3);
const eqB = place(pairs(`0,142 20,138 28,150 40,162 50,152 56,167 72,166 88,142 94,142 98,126 105,138 110,120 118,120 124,125 180,124 183,108 190,124 263,124 274,108 280,118 285,116 380,116 384,108 392,122 428,122 432,110 440,116 446,106 458,98 464,104 470,122 518,122 530,108 540,110 546,104 550,92 560,128 622,128 628,138 634,116 640,116 646,94 652,88 660,94 666,78 674,86 682,72 690,40 698,38 706,64 720,66 725,56 736,76 778,76 784,58 790,60 794,52 804,54 814,70 898,70 908,44 912,60 920,68 966,70 975,62 988,80 1040,77 1045,73 1138,73 1146,98 1150,94 1216,94 1220,88 1226,88 1233,106 1307,106`), 1300, 140, 2.52, 3);
const eq = eqA.concat(eqB);
const losing = [[805, 815], [819, 826], [883, 940], [941, 1029], [1035, 1065], [1066, 1097], [1100, 1109], [1148, 1177], [1179, 1187], [1188, 1204], [1236, 1240], [1287, 1308], [1319, 1329], [1412, 1451], [1480, 1487], [1518, 1548], [1576, 1581], [1586, 1592], [1618, 1623], [1660, 1684], [1686, 1706], [1753, 1755], [1786, 1820]];
$('p1').innerHTML = `<path d="${path(eq)}V344H695z" fill="url(#equity)"/><path d="${path(eq)}" fill="none" stroke="#1cbcf5" stroke-width="2"/>` +
  losing.map(([a, b]) => { const s = eq.filter(p => p[0] >= a - .5 && p[0] <= b + .5); return s.length > 1 ? `<path d="${path(s)}" fill="none" stroke="#f794f2" stroke-width="2"/>` : ''; }).join('') +
  line(344, '#2222a0') + '<path d="M5.500 158V358" stroke="#000" stroke-width="2"/>' + axisBg(141, 220) + frame(140, 358) + cursor(141, 358) +
  tick(151, '45.000') + tick(206, '35.000') + tick(234, '30.000') + tick(261, '25.000') + tick(289, '20.000') + tick(317, '15.000') + tag(175, '40.580', '#dbe6f0', '#35bfe8', 36);

/* position size */
const bar = (list, ox, s, y, h, c) => pairs(list).map(([a, b]) => `<rect x="${Math.round(ox + a / s)}" y="${y}" width="${Math.max(1, Math.floor((b - a) / s))}" height="${h}" fill="${c}"/>`).join('');
$('p2').innerHTML = bar('316,331 524,529 855,883 948,953 1032,1034 1060,1141 1171,1173 1232,1239', 690, 2.529, 368, 63, '#00c8ff') +
  bar('33,56 73,124 263,288 518,545 548,561 775,813 1020,1038 1139,1149 1217,1237', 1300, 2.52, 368, 63, '#00c8ff') +
  bar('192,301 344,364 483,503 632,645 1019,1029 1143,1168 1257,1270 1300,1338 1361,1393 1512,1525', 690, 2.529, 432, 62, '#ff8cff') +
  bar('18,33 179,194 379,396 427,470 624,710 720,737 896,922 959,987 1040,1043', 1300, 2.52, 432, 62, '#ff8cff') +
  line(431, '#2222a0') + axisBg(361, 141) + frame(361, 499) + cursor(361, 499) + tick(368, '1.000') + tick(399, '500') + tag(431, '0', '#dbe6f0', '#35bfe8', 9) + tick(462, '-500');

/* price, moving averages and orders; units are thirds of a pixel */
const price = pairs(`15,405 25,390 38,360 50,345 62,352 75,350 90,355 102,372 115,358 130,345 140,338 155,352 170,345 185,352 205,355 222,350 232,400 240,425 255,422 262,455 275,460 297,458 310,500 325,540 345,590 360,550 372,505 380,475 395,490 405,510 418,575 433,545 453,570 470,515 485,500 495,505 505,490 520,492 545,485 560,468 570,480 582,530 592,515 605,495 612,508 625,470 642,435 655,500 672,535 685,510 700,508 715,522 735,500 750,515 760,530 770,518 780,530 792,578 812,565 820,625 840,612 860,655 875,590 885,570 895,572 905,590 918,605 930,652 950,648 965,640 1000,645 1015,632 1030,600 1045,625 1060,645 1085,665 1100,675 1112,655 1130,635 1145,632 1160,620 1175,635 1195,635 1210,650 1222,645 1235,620`)
  .concat(shift(pairs(`20,570 45,525 60,500 70,480 85,475 95,440 110,430 120,442 135,460 148,470 160,445 178,438 200,455 220,490 235,450 250,462 265,490 290,455 310,470 330,490 355,500 375,492 400,530 415,545 422,525 440,545 450,540 465,560 485,580 500,570 525,565 545,540 560,548 570,560 585,545 605,548 625,570 645,540 665,520 685,515 700,480 715,450 730,425 750,420 765,420 775,415 790,435 805,448 822,475 835,460 860,455 885,440 900,430 912,400 925,380 945,375 965,385 990,395 1015,402 1030,385 1045,410 1062,430 1080,410 1100,408 1115,430 1130,445 1150,450 1165,428 1185,432 1205,442 1215,425 1230,408 1250,400`), 1230))
  .concat(shift(pairs(`55,395 60,415 90,412 125,430 140,430 150,460 175,498 190,498 208,512 222,555 235,555 250,560 265,570 285,570 305,550 320,535 345,495 360,502 385,500 405,492 415,505 425,485 450,472 460,480 470,510 482,515 500,500 525,502 535,530 550,540 568,548 580,520 605,510 625,488 640,505 660,500 680,482 695,490 705,510 730,505 755,485 770,500 785,515 800,492 825,460 845,455 860,420 875,455 890,470 910,475 930,485 952,472`), 2430));
function resample(list, step) {
  const out = []; let i = 0;
  for (let x = list[0][0]; x < list[list.length - 1][0]; x += step) {
    while (list[i + 1][0] < x) i++;
    const [a, b] = [list[i], list[i + 1]];
    out.push([x, a[1] + (b[1] - a[1]) * (x - a[0]) / (b[0] - a[0])]);
  }
  return out;
}
const trail = (list, n) => list.map(([x], i) => { const s = list.slice(Math.max(0, i - n), i + 1); return [x, s.reduce((t, p) => t + p[1], 0) / s.length]; });
const fine = resample(price, 3);
let up = '', down = '';
fine.forEach(([x, y]) => { const a = y - 2 - rnd() * rnd() * 24, b = y + 2 + rnd() * rnd() * 24; if (rnd() > .5) up += `M${x} ${a | 0}V${b | 0}`; else down += `M${x} ${a | 0}V${b | 0}`; });
const X = 'M-10-17L0-8L10-17L17-10L8 0L17 10L10 17L0 8L-10 17L-17 10L-8 0L-17-10z', UP = 'M0-19L15-3H8V19H-8V-3H-15z', DN = 'M0 19L15 3H8V-19H-8V3H-15z';
const marks = (a, b, c, d, fill, stroke) => pairs(a).concat(shift(pairs(b), 1230), shift(pairs(c), 2430)).map(([x, y]) => `<path transform="translate(${x} ${y})" d="${d}" fill="${fill}" stroke="${stroke}" stroke-width="2" stroke-linejoin="round"/>`).join('');
const tags = (list, y) => list.split('|').map(s => { const [x, t] = s.split(';'); return `<text x="${x}" y="${y}" text-anchor="end" font-size="32">${t}</text>`; }).join('');
const divs = '464 484 541 703 730 1123 1234 1327 1333 1366 1493 1497 1570 1615 1693 1759 1916 1975 1980 1990 2027 2167 2251 2410 2494 2555 2590 2780 2815 2860 3031 3109 3152 3178 3292'.split(' ').map(x => `M${x} 688V739`).join('');
$('p3').innerHTML = line(609, '#f0828c') + cursor(502, 741) + `<g transform="translate(690 495) scale(.3333)" fill="none">
  <path d="M15 688H56q6 0 6 6V739H15zM250 739V694q0-6 6-6H866q6 0 6 6V739zM910 739V694q0-6 6-6H3380q6 0 6 6V739z" fill="#a8f0ff" stroke="#18b4dc" stroke-width="3"/><path d="${divs}" stroke="#18b4dc" stroke-width="3"/>
  <path d="M124 26H860V68q0 5-5 5H129q-5 0-5-5zM940 26H3410V68q0 5-5 5H945q-5 0-5-5z" fill="#f1d8fb"/>
  <path d="${up}" stroke="#4cba4c" stroke-width="3"/><path d="${down}" stroke="#c85050" stroke-width="3"/>
  <path d="${path(trail(fine, 9))}" stroke="#7878e8" stroke-width="3"/><path d="${path(trail(fine, 2))}" stroke="#e01030" stroke-width="4"/>
  ${marks('391,442 626,445 1045,583 1129,598 1225,615', '121,406 160,412 238,428 648,502 664,490 748,390 940,340', '46,367 64,380 367,480 631,455 763,463 871,412', X, '#ff8cf0', '#b050a8')}
  ${marks('230,352 408,505 574,482 751,500 1210,630', '126,425 262,457 313,440 385,478 566,526 622,538 814,430 1051,388 1108,392', '142,420 256,537 466,462 541,504 640,470', DN, '#ff8cf0', '#b050a8')}
  ${marks('356,574 433,571 596,529 763,553 1219,673', '154,485 277,498 355,535 422,552 577,577 636,580 829,496 1072,451 1156,463', '241,565 277,590 493,536 571,565 640,536', X, '#10ccff', '#0878a8')}
  ${marks('376,513 622,498 1015,660 1126,663', '28,592 160,468 232,484 652,557 688,512 913,422 1216,452', '52,418 322,553 613,524 755,506 847,463', UP, '#10ccff', '#0878a8')}
  <g fill="#fff" stroke-width="4"><circle cx="239" cy="386" r="9" stroke="#88e"/><circle cx="239" cy="404" r="9" stroke="#e35"/><circle cx="239" cy="421" r="9" stroke="#111"/></g>
  <g fill="#000">${tags('326;1.000@90,40|490;00@85,63|507;!|672;00@83,99|720;01|849;@83,12|1143;1.000@78,95|1226;78,06|1308;76,92|1447;@87,87|1488;3|1566;6,98|1588;4|1640;15|1713;4,26|1892;000@81,84|1949;,43|1976;6|2075;8,65|2142;,68|2267;@90,97|2379;88,62|2436;,32|2573;0@89,91|2592;!|2662;7,01|2784;@81,23|2894;84,40|2994;84,82|3068;2,80|3157;85,61|3292;@85,12|3400;87,78', 60)}
  ${tags('50;46|452;1.000@82,83|479;2|531;,92|693;00@85,13|720;0|861;0@84,09|1112;1.000@78,71|1224;78,76|1315;78,11|1355;3|1482;@87,42|1560;7,35|1605;86|1683;4,81|1748;,81|1904;00@82,74|1963;,41|2016;3|2157;0@86,65|2240;0,45|2399;00@88,94|2482;8,27|2545;,02|2580;6|2770;.000@83,20|2804;7|2848;01|3020;00@84,81|3099;3,36|3142;3|3169;2|3281;86,37|3374;88,46', 726)}</g></g>` +
  '<path d="M6 590l5 8 5-4 7-9" fill="none" stroke="#d22040" stroke-width="2"/><path d="M9 590v12M20 582v8" stroke="#4cba4c"/><text x="7" y="739" font-size="11">© P</text>' +
  axisBg(502, 242) + frame(502, 741) + tick(524, '105') + tick(558, '100', 1) + tick(592, '95') + tick(627, '90') + tick(695, '80') + tag(609, '92,6', '#f4f41a', '#000', 24) + tag(660, '86,050', '#dbe4f4', '#7078e0', 36) + tag(644, '86,42', '#f0c820', '#000', 30);

/* ADX with its trailing average */
const adxA = pairs(`13,570 16,550 21,600 26,622 32,620 37,645 41,620 44,530 46,515 50,590 54,622 60,640 64,655 66,628 70,660 74,635 78,662 82,686 87,604 92,650 97,668 101,672 105,632 110,672 115,655 120,632 125,660 133,615 138,660 144,674 150,620 156,598 163,612 168,556 174,610 179,546 187,637 193,500 198,300 202,150 206,121 212,185 218,212 226,184 233,240 241,290 243,320 248,330 254,270 258,200 261,160 267,195 273,300 281,448 287,398 293,425 300,490 306,555 310,568 315,520 318,420 322,376 328,470 334,560 338,590 345,450 353,322 360,440 368,555 373,542 377,574 380,540 384,572 390,520 394,550 401,496 408,520 414,560 418,568 420,540 428,590 432,572 436,612 442,624 450,615 456,584 463,625 469,642 474,578 480,600 488,400 494,298 502,420 510,445 518,523 526,480 530,445 536,450 540,436 543,452 552,350 558,290 562,292 568,238 574,400 584,570 594,640 600,650 606,570 610,612 616,625 624,580 630,560 634,450 638,397 644,520 654,584 662,500 668,370 672,364 678,480 684,530 688,400 692,310 697,295 704,390 711,450 718,340 724,280 730,390 735,420 740,375 746,470 754,540 762,590 768,528 773,620 778,590 784,508 792,550 800,620 808,645 812,590 818,640 826,665 834,690 836,672 841,697 848,580 856,460 861,445 867,310 871,270 876,400 881,437 887,330 893,320 898,335 906,274 912,380 920,480 928,540 932,532 937,595 944,570 950,480 955,550 962,570 968,612 975,540 980,545 985,585 992,560 1000,610 1005,590 1012,643 1018,520 1023,455 1028,500 1033,468 1038,560 1047,610 1056,500 1062,470 1068,480 1076,380 1082,470 1086,475 1094,322 1100,360 1108,405 1115,278 1121,285 1126,265 1132,380 1142,520 1150,390 1160,355 1168,440 1176,500 1180,578 1184,552 1192,628 1197,598 1200,630 1210,570 1216,480 1222,362 1230,500 1236,460 1242,530 1252,575 1258,420 1264,298 1270,430 1276,470 1280,430 1288,515 1297,545 1306,380 1314,290 1322,430 1330,445 1338,530 1346,450 1350,520 1357,573 1364,430 1370,300 1376,260 1382,211 1388,350 1396,470 1402,465 1410,560 1418,614 1422,590 1426,612 1432,590 1436,605 1442,540 1445,546 1450,523 1454,572 1460,548 1468,630 1474,668 1482,660 1490,570 1496,522 1504,590 1509,598 1515,476 1522,480 1528,545 1534,600`);
const adxB = pairs(`0,600 6,568 11,604 16,500 20,390 25,383 31,490 37,440 42,504 50,445 54,530 60,560 65,605 70,612 75,470 82,372 89,362 96,474 102,410 108,450 115,370 122,490 132,603 140,637 146,602 150,612 156,630 162,600 168,520 174,562 178,540 185,380 192,510 200,545 208,580 212,575 216,602 221,562 228,590 234,630 239,575 243,618 249,590 254,535 259,560 266,400 271,382 277,400 284,490 290,530 294,578 297,545 304,625 309,650 313,650 321,685 325,620 330,625 335,670 339,640 343,670 348,570 352,540 358,570 366,640 372,645 380,480 387,328 395,420 402,485 410,590 418,632 428,400 434,290 439,275 447,232 453,290 460,245 466,320 474,345 482,470 488,590 493,617 500,550 507,505 514,538 520,430 527,380 533,298 538,430 545,512 552,385 556,440 565,308 572,360 578,395 584,340 590,370 596,345 605,335 612,390 617,470 622,517 627,410 634,380 642,260 650,130 654,85 657,82 662,120 667,165 670,145 676,310 682,364 688,270 695,205 702,300 709,430 717,517 722,450 728,362 735,450 740,540 746,580 755,517 762,550 767,580 777,475 781,500 787,390 792,320 795,290 803,340 810,440 817,570 825,555 832,595 839,515 845,550 852,330 857,300 865,440 872,500 878,566 883,530 886,568 896,520 903,360 910,289 916,430 926,580 932,615 937,607 943,640 948,676 954,600 960,430 967,310 975,268 983,320 990,470 998,600 1006,646 1010,560 1014,505 1017,540 1024,428 1032,440 1038,522 1044,482 1050,500 1058,590 1066,620 1071,565 1077,640 1084,668 1090,580 1097,502 1104,570 1110,572 1117,600 1126,660 1132,600 1138,500 1143,430 1148,490 1153,475 1160,425 1167,415 1174,500 1182,400 1188,410 1194,365 1200,345 1208,440 1216,514 1222,390 1228,332 1234,450 1238,488 1245,470 1250,360 1256,320 1264,475 1272,450 1277,430 1283,510 1287,535 1290,520 1296,590 1302,640 1306,652`);
const adx = place(adxA, 690, 740, 2.529, 3).concat(place(adxB, 1300, 740, 2.52, 3));
const slow = trail(resample(adx, 1), 6).map(([x, y]) => [x + 2, y + (rnd() - .5) * 6]);
$('p4').innerHTML = line(751, '#cf3a48') + cursor(744, 983) + `<path d="${path(adx)}" fill="none" stroke="#111" stroke-width="1.100"/><path d="${path(slow)}" fill="none" stroke="#dc747c" stroke-width="1.200"/><path d="M17 952L22 920" stroke="#000"/>` + line(904, '#2828c0') +
  '<circle cx="769.500" cy="820.500" r="3" fill="#fff" stroke="#111"/><circle cx="769.500" cy="886.500" r="3" fill="#fff" stroke="#e66"/>' +
  axisBg(744, 240) + '<path d="M5 744.500H1875.500V983.500H5" fill="none" stroke="#70868f"/>' + tick(751, '50', 1) +
  [45, 40, 35, 30, 25, 20, 15].map((v, i) => tick([777, 802, 828, 853, 879, 904, 930][i], v)).join('') + tag(937, '13,582', '#dbe6f0', '#e07078', 36) + tag(957, '9,6703', '#dbe6f0', '#000', 36);

/* time axis */
const dates = '64;2014 122;mar 182;may 242;jul 304;sep 366;nov 426;2015 484;mar 545;may 605;jul 667;sep 728; 788; 845;mar 906;may 968;jul 1029;sep 1089;nov 1150;2017 1209;mar 1269;may 1332;jul 1393;sep 1453;nov 1512;2018 1570;mar 1631;may 1693;jul 1755;sep 1815;nov';
$('p5').innerHTML = '<rect x="5" y="984" width="1911" height="22" fill="#fff"/><path d="M5 1005.500H1916" stroke="#70868f"/>' + dates.split(' ').map(d => { const [x, t] = d.split(';'), y = t > '2000' && t < '3'; return `<path d="M${x}.500 984v4" stroke="#70868f"/><text x="${x}" y="1000" text-anchor="middle" font-size="${y ? 12 : 11}" font-weight="${y ? 700 : 400}">${t}</text>`; }).join('') +
  '<path d="M769.500 984v4" stroke="#000"/><rect x="718.500" y="988.500" width="102" height="14" fill="#f4f41a" stroke="#70868f"/><text x="769.500" y="1000" text-anchor="middle" font-size="11">vie 11-dic-2015 9:00</text>';

/* ring gauges of the report */
document.querySelectorAll('.ring').forEach(el => {
  const { p, a, b, t } = el.dataset, A = 2 * Math.PI * p, pt = r => `${52 + r * Math.sin(A)} ${52 - r * Math.cos(A)}`;
  el.innerHTML = `<circle cx="52" cy="52" r="51" fill="url(#ring-${b})"/><path d="M52 1A51 51 0 ${p > .5 ? 1 : 0} 1 ${pt(51)}L52 52z" fill="url(#ring-${a})"/><circle cx="52" cy="52" r="36" fill="url(#hole)"/><text x="52" y="58" text-anchor="middle" font-size="16" fill="${a === 'green' ? '#119a11' : '#000'}">${t}</text>`;
});

/* gross result by quarter; bar edges and tops in report units */
const profit = [[228, 826], [285, 790], [304, 773], [323, 904], [342, 872], [380, 777], [418, 931], [437, 829], [494, 868], [532, 878]];
const loss = [[247, 950], [266, 950], [399, 950], [456, 950], [475, 950], [513, 950], [551, 940], [570, 950], [589, 950]];
const scale = [[779, '7.000'], [801, '6.000'], [824, '5.000', 1], [847, '4.000'], [869, '3.000'], [892, '2.000'], [914, '1.000'], [937, '0', 1]];
$('bars').innerHTML = '<rect x="206.500" y="760.500" width="401" height="200" fill="none" stroke="#80949d"/>' +
  [237, 313, 389, 465, 541].map(x => `<path d="M${x}.500 761V943" stroke="#c0ccd2"/>`).join('') +
  scale.map(([y, t, b]) => `<path d="M207 ${y}.500H607" stroke="${b ? '#b4bfc5' : '#c2ced4'}"/><path d="M608 ${y}.500h4" stroke="#70868f"/><text x="613" y="${y + 4}" font-size="${b ? 12 : 11}" font-weight="${b ? 700 : 400}">${t}</text>`).join('') +
  profit.map(([x, y]) => `<rect x="${x}.500" y="${y}.500" width="17" height="${937 - y}" fill="url(#green)" stroke="#1a8d1a"/>`).join('') +
  loss.map(([x, y]) => `<rect x="${x}.500" y="937.500" width="17" height="${y - 937}" fill="url(#red)" stroke="#9a2a11"/>`).join('') + '<path d="M207 937.500H608" stroke="#2222a0"/>';
```
